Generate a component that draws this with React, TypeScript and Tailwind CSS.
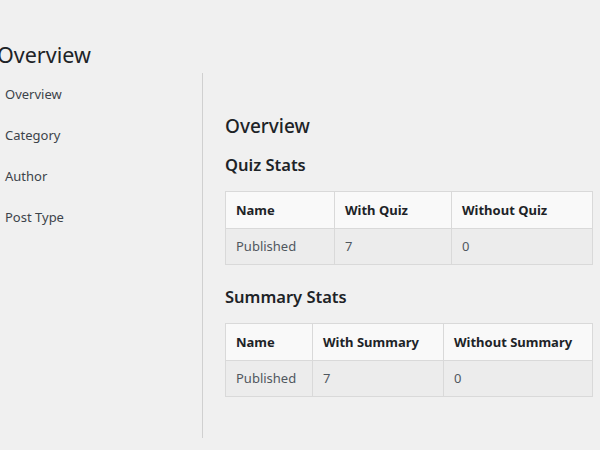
const font = { fontFamily: '"Noto Sans", "Open Sans", sans-serif' };

type Row = string[];

function StatsTable({ cols, widths, rows }: { cols: string[]; widths: string[]; rows: Row[] }) {
  return (
    <table className="w-[368px] border-collapse border border-[#d3d3d3] text-[13px]">
      <thead>
        <tr className="bg-[#f9f9f9] h-[37px]">
          {cols.map((c, i) => (
            <th
              key={c}
              className={`${widths[i]} border border-[#d9d9d9] px-[10px] pt-[2px] text-left font-bold text-[#1d2327]`}
            >
              {c}
            </th>
          ))}
        </tr>
      </thead>
      <tbody>
        {rows.map((r, ri) => (
          <tr key={ri} className="bg-[#ececec] h-[36px]">
            {r.map((v, i) => (
              <td key={i} className="border border-[#d9d9d9] px-[10px] pt-[1px] text-[#50575e]">
                {v}
              </td>
            ))}
          </tr>
        ))}
      </tbody>
    </table>
  );
}

export default function App() {
  return (
    <div className="w-[600px] h-[450px] overflow-hidden bg-[#f0f0f0]" style={font}>
      <h1 className="ml-[-3px] pt-[40px] text-[21.5px] leading-[30px] text-[#1d2327]">Overview</h1>
      <div className="flex mt-[3px]">
        <nav className="w-[203px] shrink-0 border-r border-[#d0d0d0] h-[365px]">
          <ul className="pl-[5px] pt-[11px] text-[13px] text-[#3c434a] flex flex-col gap-[20px]">
            <li className="leading-[21px]">Overview</li>
            <li className="leading-[21px]">Category</li>
            <li className="leading-[21px]">Author</li>
            <li className="leading-[21px]">Post Type</li>
          </ul>
        </nav>
        <main className="pl-[22px] pt-[41px]">
          <h2 className="text-[19px] leading-[24px] font-medium text-[#1d2327]">Overview</h2>
          <h3 className="mt-[15px] text-[16.5px] leading-[24px] font-semibold text-[#1d2327]">Quiz Stats</h3>
          <div className="mt-[14px]">
            <StatsTable
              cols={["Name", "With Quiz", "Without Quiz"]}
              widths={["w-[109px]", "w-[117px]", ""]}
              rows={[["Published", "7", "0"]]}
            />
          </div>
          <h3 className="mt-[20px] text-[16.5px] leading-[24px] font-semibold text-[#1d2327]">Summary Stats</h3>
          <div className="mt-[14px]">
            <StatsTable
              cols={["Name", "With Summary", "Without Summary"]}
              widths={["w-[87px]", "w-[131px]", ""]}
              rows={[["Published", "7", "0"]]}
            />
          </div>
        </main>
      </div>
    </div>
  );
}
